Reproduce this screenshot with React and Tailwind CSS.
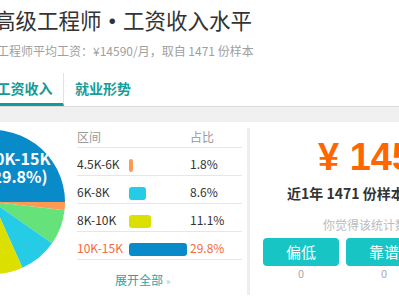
import React from "react";

const rows = [
  { range: "4.5K-6K", pct: 1.8, bar: "bg-[#ff9a55]" },
  { range: "6K-8K", pct: 8.6, bar: "bg-[#26cbe5]" },
  { range: "8K-10K", pct: 11.1, bar: "bg-[#dce000]" },
  { range: "10K-15K", pct: 29.8, bar: "bg-[#0a8bc9]", hot: true },
];

// clockwise from 3 o'clock
const slices = [
  { pct: 1.8, fill: "#ff9a55" },
  { pct: 7.9, fill: "#66e27a" },
  { pct: 8.6, fill: "#26cbe5" },
  { pct: 11.1, fill: "#dce000" },
  { pct: 21.5, fill: "#9b7fe0" },
  { pct: 19.3, fill: "#f4c04c" },
  { pct: 29.8, fill: "#0a8bc9" },
];

const Pie = () => {
  const c = 72;
  const r = 72;
  let a = 0;
  const pt = (ang) => [c + r * Math.cos(ang), c + r * Math.sin(ang)];
  return (
    <svg width="144" height="144" viewBox="0 0 144 144" className="shrink-0 ml-[-79px] mt-[8px]">
      {slices.map((s, i) => {
        const a1 = a;
        const a2 = a + (s.pct / 100) * Math.PI * 2;
        a = a2;
        const [x1, y1] = pt(a1);
        const [x2, y2] = pt(a2);
        const large = a2 - a1 > Math.PI ? 1 : 0;
        return (
          <path
            key={i}
            d={`M${c} ${c} L${x1} ${y1} A${r} ${r} 0 ${large} 1 ${x2} ${y2} Z`}
            fill={s.fill}
          />
        );
      })}
      <text x="97" y="35" textAnchor="middle" fill="#fff" fontSize="16" fontWeight="700" fontFamily="'Noto Sans CJK SC', sans-serif">
        10K-15K
      </text>
      <text x="96" y="53" textAnchor="middle" fill="#fff" fontSize="16" fontWeight="700" fontFamily="'Noto Sans CJK SC', sans-serif">
        (29.8%)
      </text>
    </svg>
  );
};

export default function App() {
  return (
    <div className="w-[399px] h-[300px] overflow-hidden bg-white font-['Noto_Sans_CJK_SC',sans-serif]">
      {/* Header */}
      <div className="whitespace-nowrap">
        <h1 className="mt-[5px] ml-[-6px] text-[21.5px] leading-[30px] text-[#333]">
          高级工程师<span className="font-bold">•</span>工资收入水平
        </h1>
        <p className="mt-[6px] ml-[-3px] text-[12px] leading-[20px] text-[#a0a0a0]">
          工程师平均工资：¥14590/月，取自 1471 份样本
        </p>
      </div>

      {/* Tabs */}
      <div className="mt-[12px] flex h-[33px] whitespace-nowrap">
        <div className="ml-[-14px] w-[78px] border-b-[3px] border-[#0e9d9a] border-r border-r-[#e2e2e2] flex items-center justify-center text-[14px] font-bold text-[#159a98]">
          工资收入
        </div>
        <div className="pl-[11px] flex items-center text-[14px] font-bold text-[#1a9c9a] pb-[3px]">
          就业形势
        </div>
      </div>
      <div className="h-[16px] bg-[#f0f0f0] border-t border-[#dcdcdc]" />

      {/* Body */}
      <div className="flex h-[178px]">
        {/* Left: chart + table */}
        <div className="w-[247px] flex overflow-hidden">
          <Pie />
          <div className="ml-[12px] w-[165px] shrink-0 text-[12px]">
            <div className="mt-[2px] h-[24px] pt-[3px] flex items-center border-b border-[#e6e6e6] text-[#999]">
              <span className="w-[52px]">区间</span>
              <span className="w-[61px]" />
              <span>占比</span>
            </div>
            {rows.map((r) => (
              <div
                key={r.range}
                className={`h-[28px] pt-[4px] flex items-center border-b border-[#e6e6e6] ${
                  r.hot ? "text-[#f5693d]" : "text-[#333]"
                }`}
              >
                <span className="w-[52px]">{r.range}</span>
                <span className="w-[61px] flex">
                  <span
                    className={`block h-[13px] mt-[3px] rounded-[3px] ${r.bar}`}
                    style={{ width: Math.max(4, Math.round(r.pct * 1.95)) }}
                  />
                </span>
                <span>{r.pct}%</span>
              </div>
            ))}
            <div className="mt-[10px] pl-[38px] leading-[20px] text-[#2aa3a3] whitespace-nowrap">
              展开全部<span className="ml-[3px] text-[9px] text-[#7cc7c5]">»</span>
            </div>
          </div>
        </div>

        <div className="w-[3px] mt-[6px] h-[167px] bg-[#eeeeee]" />

        {/* Right: summary */}
        <div className="flex-1 whitespace-nowrap overflow-hidden">
          <div className="mt-[16px] pl-[68px] text-[38px] leading-[38px] font-bold text-[#ff6600] font-['Liberation_Sans',sans-serif]">
            ¥ 14590
          </div>
          <div className="mt-[7px] pl-[37px] text-[14px] leading-[20px] font-bold text-[#333]">
            近1年 1471 份样本
          </div>
          <div className="mt-[12px] pl-[73px] text-[12px] leading-[20px] text-[#bbb]">
            你觉得该统计数据准确吗？
          </div>
          <div className="mt-[3px] pl-[13px] flex gap-[7px]">
            {["偏低", "靠谱", "偏高"].map((b) => (
              <div key={b} className="w-[76px] shrink-0 flex flex-col items-center">
                <div className="w-full h-[28px] rounded-[4px] bg-[#17c6c4] text-white text-[15px] flex items-center justify-center">
                  {b}
                </div>
                <div className="text-[11px] leading-[14px] text-[#aaa]">0</div>
              </div>
            ))}
          </div>
        </div>
      </div>
    </div>
  );
}
